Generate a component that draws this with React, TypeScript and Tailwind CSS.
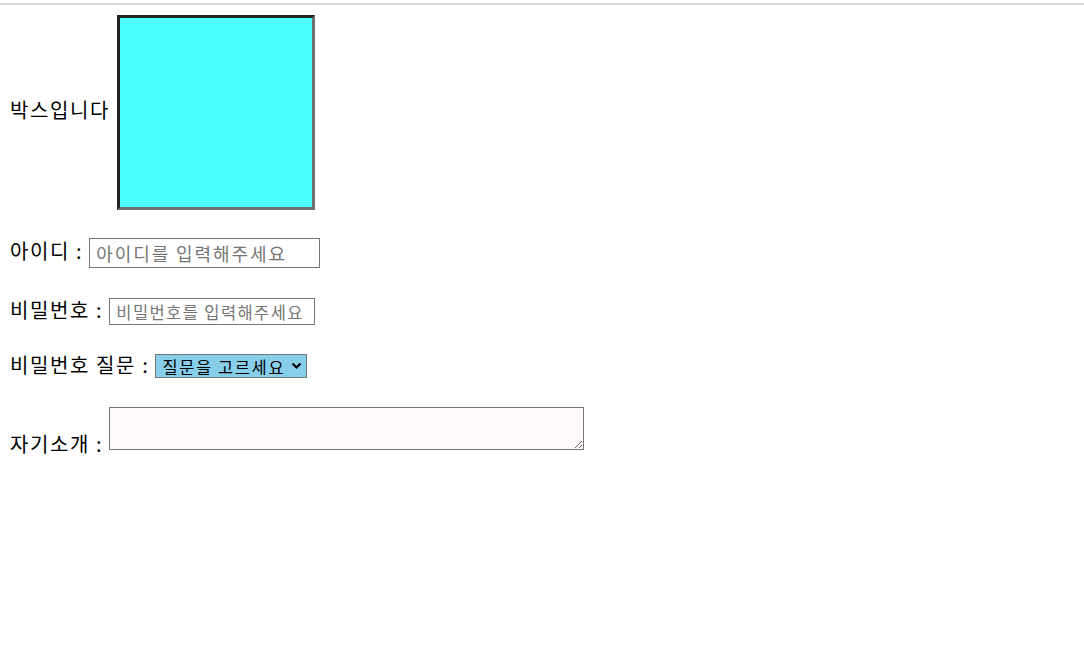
const font = { fontFamily: '"Noto Sans CJK KR", "Noto Sans", sans-serif' };

export default function App() {
  return (
    <div className="min-h-[656px] bg-white text-black" style={font}>
      <div className="h-[3px]" />
      <div className="h-[2px] bg-[#dadce0]" />
      <div className="px-[10px] pt-[10px] text-[20px] leading-none tracking-[1.6px]">
        {/* box row */}
        <div className="flex items-center">
          <span className="whitespace-pre pb-[5px] pr-[1px]">박스입니다 </span>
          <div className="h-[195px] w-[198px] border-[3px] border-t-[#222222] border-l-[#222222] border-r-[#6f6f6f] border-b-[#6f6f6f] bg-[#4dffff]" />
        </div>

        <div className="mt-[28px] flex h-[30px] items-center">
          <span className="whitespace-pre pb-[4px]">아이디 : </span>
          <input
            type="text"
            placeholder="아이디를 입력해주세요"
            className="h-[30px] w-[231px] border border-[#767676] px-[6px] text-[18px] tracking-[1.9px] placeholder:text-[#757575] outline-none"
            style={font}
          />
        </div>

        <div className="mt-[30px] flex h-[27px] items-center">
          <span className="whitespace-pre pb-[3px]">비밀번호 : </span>
          <input
            type="text"
            placeholder="비밀번호를 입력해주세요"
            className="h-[27px] w-[206px] border border-[#767676] px-[6px] text-[16.5px] tracking-[1.4px] placeholder:text-[#757575] outline-none"
            style={font}
          />
        </div>

        <div className="mt-[29px] flex h-[24px] items-center">
          <span className="whitespace-pre pb-[2px]">비밀번호 질문 : </span>
          <span className="relative inline-block">
            <select
              className="h-[24px] w-[152px] appearance-none border border-[#767676] bg-[#87ceeb] pl-[6px] pr-[20px] pt-[2px] text-[16.5px] leading-none tracking-[1.6px] text-black outline-none"
              style={font}
              defaultValue=""
            >
              <option value="">질문을 고르세요</option>
              <option value="1">태어난 곳은?</option>
              <option value="2">좋아하는 음식은?</option>
            </select>
            <svg
              className="pointer-events-none absolute right-[5px] top-[8px]"
              width="11"
              height="8"
              viewBox="0 0 11 8"
            >
              <path d="M1.5 1.5 L5.5 5.5 L9.5 1.5" fill="none" stroke="#000" strokeWidth="2.2" />
            </svg>
          </span>
        </div>

        <div className="mt-[29px] flex items-end">
          <span className="whitespace-pre mb-[-4px]">자기소개 : </span>
          <textarea
            className="h-[43px] w-[475px] border border-[#767676] bg-[#fffafa] outline-none"
            style={font}
          />
        </div>
      </div>
    </div>
  );
}
